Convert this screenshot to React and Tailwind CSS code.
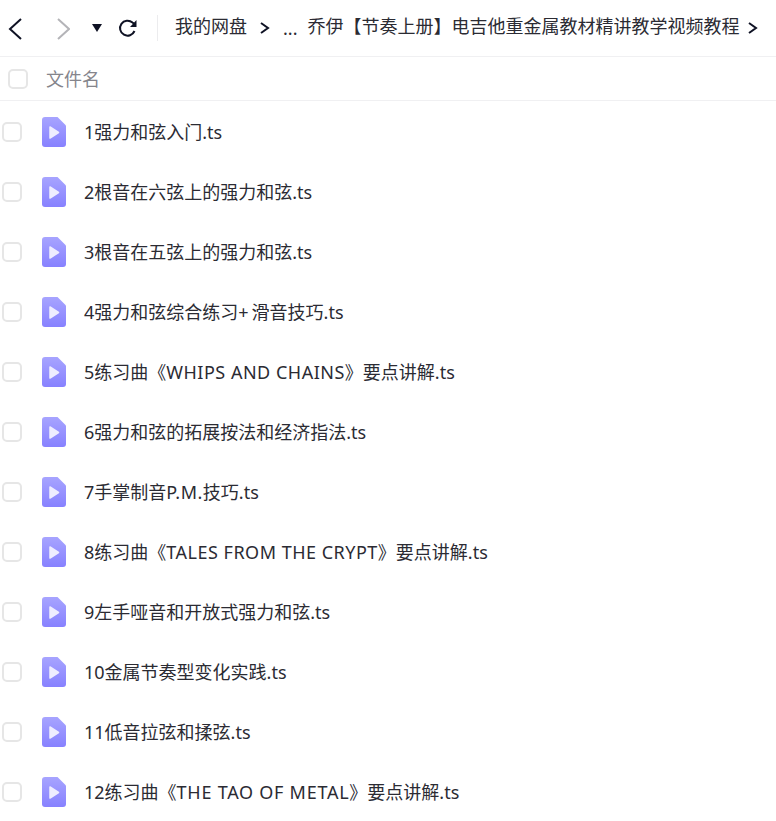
const files = [
  { pre: "1强力和弦入门.ts" },
  { pre: "2根音在六弦上的强力和弦.ts" },
  { pre: "3根音在五弦上的强力和弦.ts" },
  { pre: "4强力和弦综合练习", mid: "+", post: "滑音技巧.ts", track: "tracking-[3px]" },
  { pre: "5练习曲《", mid: "WHIPS AND CHAINS", post: "》要点讲解.ts", track: "tracking-[0.5px]" },
  { pre: "6强力和弦的拓展按法和经济指法.ts" },
  { pre: "7手掌制音", mid: "P.M.", post: "技巧.ts", track: "tracking-[0.5px]" },
  { pre: "8练习曲《", mid: "TALES FROM THE CRYPT", post: "》要点讲解.ts", track: "tracking-[0.5px]" },
  { pre: "9左手哑音和开放式强力和弦.ts" },
  { pre: "10金属节奏型变化实践.ts" },
  { pre: "11低音拉弦和揉弦.ts" },
  { pre: "12练习曲《", mid: "THE TAO OF METAL", post: "》要点讲解.ts", track: "tracking-[0.75px]" },
];

function FileIcon() {
  return (
    <svg width="24" height="30" viewBox="0 0 24 30" className="shrink-0">
      <defs>
        <linearGradient id="fileGrad" x1="0" y1="0" x2="0" y2="1">
          <stop offset="0" stopColor="#a7a4ff" />
          <stop offset="1" stopColor="#8781ff" />
        </linearGradient>
      </defs>
      <path
        d="M3 0H15.5L24 8.5V27a3 3 0 0 1-3 3H3a3 3 0 0 1-3-3V3a3 3 0 0 1 3-3z"
        fill="url(#fileGrad)"
      />
      <path d="M8 10L16.5 15.5L8 21z" fill="#eeedff" stroke="#eeedff" strokeWidth="1.5" strokeLinejoin="round" />
    </svg>
  );
}

function Checkbox({ className }) {
  return (
    <div className={`w-[20px] h-[20px] rounded-[5px] border-2 border-[#e6e6e6] bg-white shrink-0 ${className}`}></div>
  );
}

function CrumbArrow({ className }) {
  return (
    <svg width="10" height="12" viewBox="0 0 10 12" className={`shrink-0 ${className}`}>
      <path d="M1 1L8 6L1 11" fill="none" stroke="#0f1224" strokeWidth="2" />
    </svg>
  );
}

export default function App() {
  return (
    <div className="w-[776px] h-[821px] overflow-hidden bg-white font-['Noto_Sans','Noto_Sans_CJK_SC',sans-serif]">
      {/* Toolbar */}
      <div className="h-[57px] flex items-center border-b border-[#f0f0f2]">
        <svg width="14" height="24" viewBox="0 0 14 24" className="ml-[8px] shrink-0">
          <path d="M13 3L2 13L13 23" fill="none" stroke="#0f1224" strokeWidth="2" />
        </svg>
        <svg width="14" height="24" viewBox="0 0 14 24" className="ml-[34px] shrink-0">
          <path d="M2 3L13 13L2 23" fill="none" stroke="#b4b4b8" strokeWidth="2" />
        </svg>
        <svg width="10" height="8" viewBox="0 0 10 8" className="ml-[22px] shrink-0">
          <path d="M0 0H10L5 8z" fill="#0f1224" />
        </svg>
        <svg width="20" height="20" viewBox="0 0 20 20" className="ml-[16px] shrink-0">
          <path d="M16.5 13A7.5 7.5 0 1 1 14.5 4.5L17 6.5" fill="none" stroke="#0f1224" strokeWidth="2" />
          <path d="M18.5 2V9H12z" fill="#0f1224" />
        </svg>
        <div className="w-px h-[26px] bg-[#ececee] ml-[19px] shrink-0"></div>
        <div className="ml-[17px] flex items-center text-[18px] text-[#2b2b33] whitespace-nowrap">
          <span className="pb-[4px]">我的网盘</span>
          <CrumbArrow className="ml-[13px]" />
          <span className="ml-[13px]">...</span>
          <span className="ml-[10px] pb-[4px]">乔伊【节奏上册】电吉他重金属教材精讲教学视频教程</span>
          <CrumbArrow className="ml-[9px]" />
        </div>
      </div>

      {/* Header */}
      <div className="h-[44px] flex items-center border-b border-[#f0f0f2]">
        <Checkbox className="ml-[8px]" />
        <span className="ml-[18px] pt-[2px] text-[18px] text-[#85858c]">文件名</span>
      </div>

      {/* Files */}
      <div className="pt-[1px]">
        {files.map((file) => (
          <div key={file.pre} className="h-[60px] flex items-center">
            <Checkbox className="ml-[2px]" />
            <div className="ml-[20px]"><FileIcon /></div>
            <span className="ml-[18px] text-[18px] text-[#2b2b33] whitespace-nowrap">
              {file.pre}
              {file.mid && <span className={file.track}>{file.mid}</span>}
              {file.post}
            </span>
          </div>
        ))}
      </div>
    </div>
  );
}
